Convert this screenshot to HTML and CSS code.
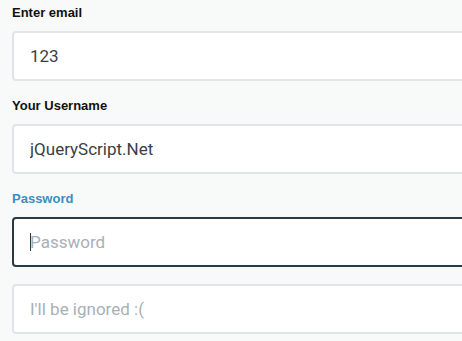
FILE: index.html
```html
<!DOCTYPE html>
<html lang="en">

<head>
    <meta charset="UTF-8">
    <meta name="viewport" content="width=device-width, initial-scale=1.0">
    <title>Form Demo</title>
    <link rel="stylesheet" href="styles.css">
</head>

<body>

    <form class="demo-form">
        <div class="field">
            <label for="email">Enter email</label>
            <input type="text" id="email" value="123">
        </div>

        <div class="field">
            <label for="username">Your Username</label>
            <input type="text" id="username" value="jQueryScript.Net">
        </div>

        <div class="field is-focused">
            <label for="password">Password</label>
            <div class="input-wrap">
                <input type="password" id="password" class="focused" placeholder="Password">
                <span class="caret"></span>
            </div>
        </div>

        <div class="field">
            <input type="text" id="ignored" placeholder="I'll be ignored :(">
        </div>
    </form>

</body>

</html>
```

FILE: styles.css
```css
body {
    margin: 0;
    background-color: #f8f9f9;
    font-family: "Liberation Sans", Arial, sans-serif;
    overflow: hidden;
}

.demo-form {
    width: 520px;
    padding: 5px 0 0 12px;
}

.field {
    margin-bottom: 17px;
}

label {
    display: block;
    font-size: 13px;
    font-weight: bold;
    line-height: 15px;
    color: #111;
    margin-bottom: 11px;
}

.is-focused label {
    color: #3a8fc1;
}

input {
    display: block;
    box-sizing: border-box;
    width: 100%;
    height: 50px;
    padding: 0 16px;
    font-family: Roboto, "Noto Sans", sans-serif;
    font-size: 17px;
    color: #3b3f43;
    background: #fff;
    border: 2px solid #e1e5e8;
    border-radius: 4px;
    outline: none;
}

input::placeholder {
    color: #a9b0b6;
}

input.focused {
    border-color: #2b3942;
}

.input-wrap {
    position: relative;
}

.caret {
    position: absolute;
    left: 18px;
    top: 16px;
    width: 1px;
    height: 18px;
    background: #2b3942;
}
```
